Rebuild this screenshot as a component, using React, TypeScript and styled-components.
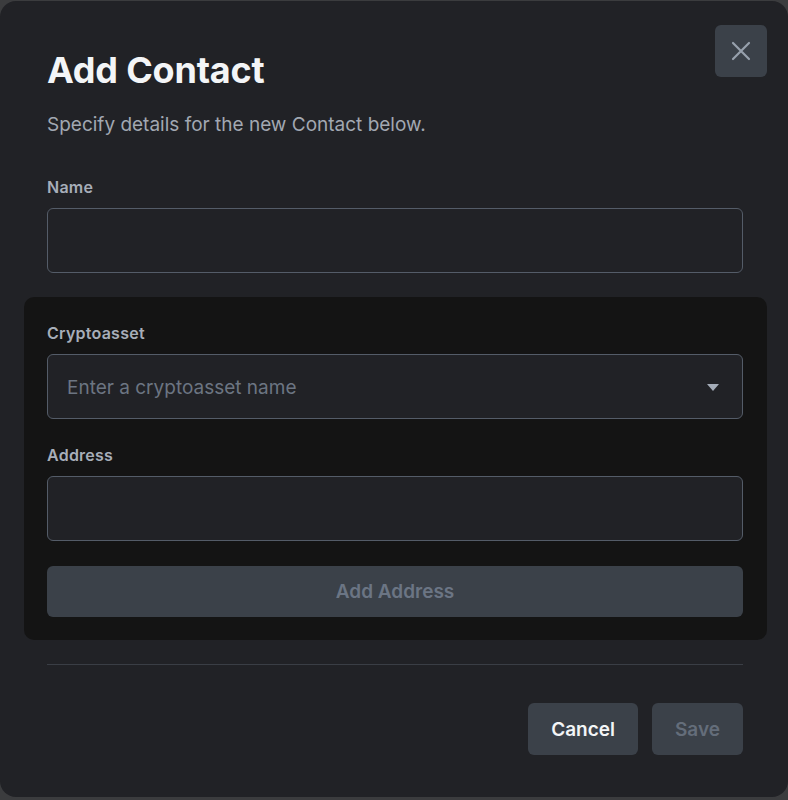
import React from 'react'
import styled, { createGlobalStyle } from 'styled-components'

const GlobalStyle = createGlobalStyle`
  html, body {
    margin: 0;
    padding: 0;
    background: #3b3c3e;
  }
  body {
    font-family: Inter, 'Noto Sans', sans-serif;
    -webkit-font-smoothing: antialiased;
  }
  * {
    box-sizing: border-box;
  }
`

const Modal = styled.div`
  position: relative;
  width: 788px;
  height: 796px;
  margin-top: 1px;
  padding: 47px 45px 0 47px;
  background: #212226;
  border-radius: 16px;
  display: flex;
  flex-direction: column;
`

const CloseButton = styled.button`
  position: absolute;
  top: 24px;
  right: 21px;
  width: 52px;
  height: 52px;
  border: none;
  border-radius: 6px;
  background: #3b4149;
  display: flex;
  align-items: center;
  justify-content: center;
  padding: 0;
  cursor: pointer;
`

const Title = styled.h1`
  margin: 0;
  font-size: 36px;
  line-height: 44px;
  font-weight: 700;
  color: #f3f5f7;
  letter-spacing: -0.2px;
`

const Subtitle = styled.p`
  margin: 19px 0 0;
  font-size: 19px;
  line-height: 28px;
  color: #a2a8b2;
`

const Field = styled.div<{ top?: number }>`
  display: flex;
  flex-direction: column;
  margin-top: ${({ top }) => top ?? 0}px;
`

const Label = styled.label`
  font-size: 16px;
  line-height: 24px;
  font-weight: 600;
  letter-spacing: 0.25px;
  color: #a7aeb9;
  margin-bottom: 9px;
`

const InputBox = styled.div`
  position: relative;
  height: 65px;
  border: 1px solid #545c68;
  border-radius: 6px;
  background: #212226;
  display: flex;
  align-items: center;
  padding: 1px 19px 0 19px;
`

const Input = styled.input`
  flex: 1;
  height: 100%;
  border: none;
  outline: none;
  background: transparent;
  padding: 0;
  font-family: Inter, 'Noto Sans', sans-serif;
  font-size: 19px;
  color: #e6e8eb;

  &::placeholder {
    color: #6c7582;
  }
`

const Caret = styled.span`
  width: 0;
  height: 0;
  margin-right: 4px;
  border-left: 6px solid transparent;
  border-right: 6px solid transparent;
  border-top: 7px solid #a4acb8;
`

const Section = styled.div`
  margin: 24px -24px 0 -23px;
  padding: 24px 24px 23px 23px;
  background: #141414;
  border-radius: 10px;
  display: flex;
  flex-direction: column;
`

const WideButton = styled.button`
  margin-top: 25px;
  height: 51px;
  border: none;
  border-radius: 6px;
  background: #3b4149;
  color: #6b7584;
  font-family: Inter, 'Noto Sans', sans-serif;
  font-size: 19px;
  font-weight: 600;
`

const Divider = styled.hr`
  margin: 24px 0 0;
  border: none;
  border-top: 1px solid #3a3e45;
`

const Footer = styled.div`
  margin-top: 38px;
  display: flex;
  justify-content: flex-end;
  gap: 14px;
`

const FooterButton = styled.button<{ disabled?: boolean }>`
  height: 52px;
  padding: 0 23px;
  border: none;
  border-radius: 6px;
  background: #3b4149;
  color: ${({ disabled }) => (disabled ? '#646d7a' : '#f3f5f7')};
  font-family: Inter, 'Noto Sans', sans-serif;
  font-size: 19px;
  font-weight: 600;
`

const App: React.FC = () => {
  return (
    <>
      <GlobalStyle />
      <Modal>
        <CloseButton aria-label="Close">
          <svg width="20" height="20" viewBox="0 0 20 20" fill="none">
            <path d="M2 2L18 18M18 2L2 18" stroke="#97a0ac" strokeWidth="2.2" strokeLinecap="round" />
          </svg>
        </CloseButton>
        <Title>Add Contact</Title>
        <Subtitle>Specify details for the new Contact below.</Subtitle>
        <Field top={36}>
          <Label>Name</Label>
          <InputBox>
            <Input />
          </InputBox>
        </Field>
        <Section>
          <Field>
            <Label>Cryptoasset</Label>
            <InputBox>
              <Input placeholder="Enter a cryptoasset name" />
              <Caret />
            </InputBox>
          </Field>
          <Field top={24}>
            <Label>Address</Label>
            <InputBox>
              <Input />
            </InputBox>
          </Field>
          <WideButton disabled>Add Address</WideButton>
        </Section>
        <Divider />
        <Footer>
          <FooterButton>Cancel</FooterButton>
          <FooterButton disabled>Save</FooterButton>
        </Footer>
      </Modal>
    </>
  )
}

export default App
